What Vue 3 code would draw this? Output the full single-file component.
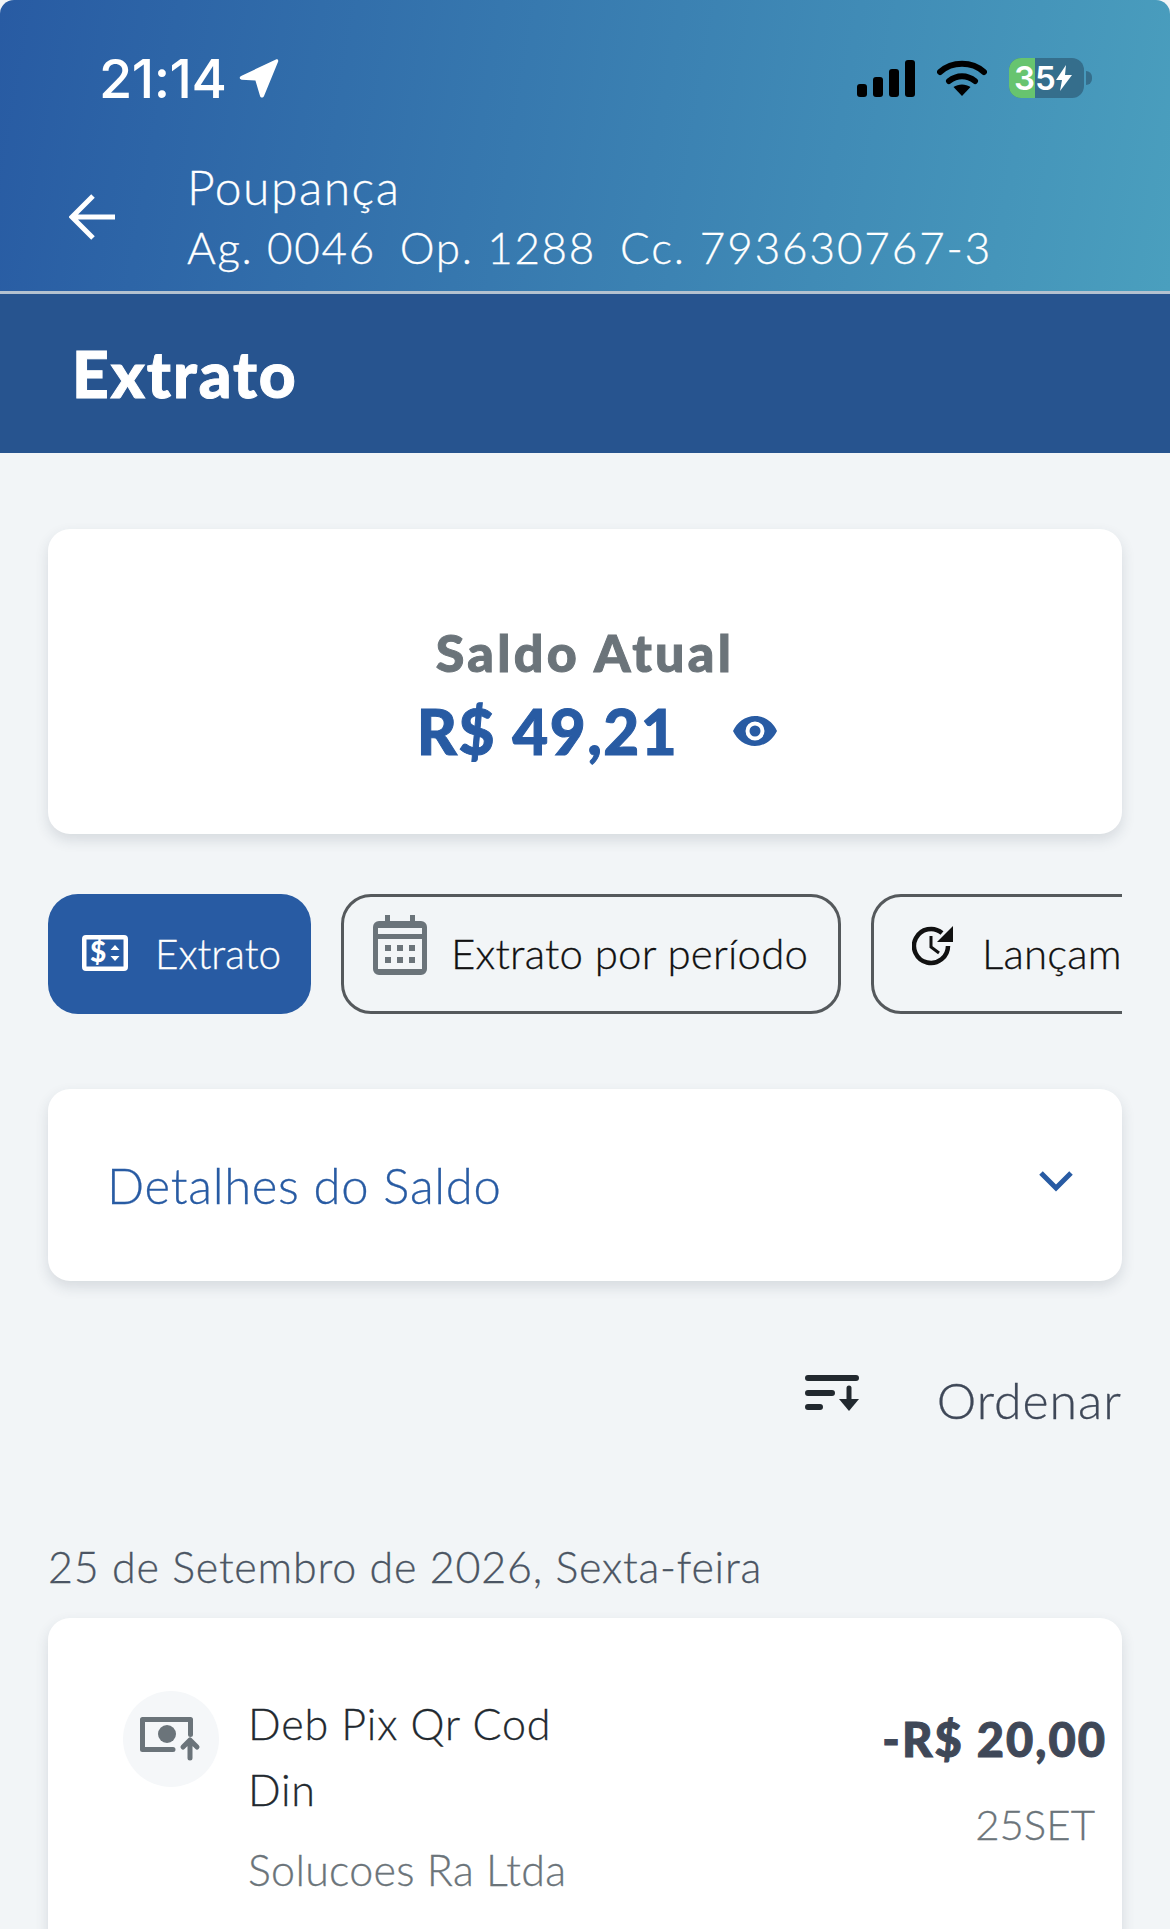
<template>
  <div class="page">
    <header class="top">
      <div class="status">
        <div class="clock">
          <span>21:14</span>
          <svg class="loc" viewBox="0 0 40 40"><path d="M37 1.5 3 17.5c-2 1-1.500 3.500.5 3.600L17 22l4.500 15c.6 2 3 2 3.800.2L39 4c.8-1.800-.3-3.300-2-2.500z" fill="#fff" /></svg>
        </div>
        <div class="indicators">
          <div class="signal">
            <i class="s1"></i><i class="s2"></i><i class="s3"></i><i class="s4"></i>
          </div>
          <svg class="wifi" viewBox="0 0 50 36">
            <path d="M3 12C15 1 35 1 47 12" fill="none" stroke="#000" stroke-width="6" stroke-linecap="round" />
            <path d="M12 21c8-6.500 18-6.500 26 0" fill="none" stroke="#000" stroke-width="6" stroke-linecap="round" />
            <path d="M25 36 16.500 27c5-3.500 12-3.500 17 0z" fill="#000" />
          </svg>
          <div class="battery">
            <span class="fill"></span>
            <span class="pct">35</span>
            <svg class="bolt" viewBox="0 0 16 26"><path d="M10 0 0 15h6l-2 11L16 10H9z" fill="#fff" /></svg>
          </div>
          <span class="nub"></span>
        </div>
      </div>
      <div class="account">
        <svg class="back" viewBox="0 0 48 48">
          <path d="M46 24H4M24 3 3 24l21 21" fill="none" stroke="#fff" stroke-width="5" />
        </svg>
        <div class="account-text">
          <div class="kind">Poupança</div>
          <div class="numbers">
            <span>Ag. 0046</span>
            <span>Op. 1288</span>
            <span class="cc">Cc. 793630767-3</span>
          </div>
        </div>
      </div>
    </header>
    <div class="band">Extrato</div>

    <main class="content">
      <section class="card balance">
        <div class="balance-label">Saldo Atual</div>
        <div class="balance-value">
          <span>R$ 49,21</span>
          <svg class="eye" viewBox="0 0 44 30">
            <path fill-rule="evenodd" d="M22 0c10 0 18 6.500 22 15-4 8.500-12 15-22 15S4 23.500 0 15C4 6.500 12 0 22 0zm0 5.500a9.500 9.500 0 1 0 0 19 9.500 9.500 0 0 0 0-19z" fill="#285ba3" />
            <circle cx="22" cy="15" r="5.500" fill="#285ba3" />
          </svg>
        </div>
      </section>

      <nav class="tabs">
        <div class="tab active">
          <svg class="ic-statement" viewBox="0 0 46 36">
            <path fill-rule="evenodd" d="M4 0h38a4 4 0 0 1 4 4v28a4 4 0 0 1-4 4H4a4 4 0 0 1-4-4V4a4 4 0 0 1 4-4zm.500 4.500v27h37v-27z" fill="#fff" />
            <text x="8" y="27" class="dollar">$</text>
            <path d="M33 10l4.500 5h-9zM33 26l-4.500-5h9z" fill="#fff" />
          </svg>
          <span>Extrato</span>
        </div>
        <div class="tab period">
          <svg class="ic-cal" viewBox="0 0 54 60">
            <path fill-rule="evenodd" d="M12 0h5v6h20V0h5v6h6a6 6 0 0 1 6 6v42a6 6 0 0 1-6 6H6a6 6 0 0 1-6-6V12a6 6 0 0 1 6-6h6zM5 13v6h44v-6zm0 11v30h44V24z" fill="#6b747a" />
            <path d="M12 30h6v6h-6zM24 30h6v6h-6zM36 30h6v6h-6zM12 42h6v6h-6zM24 42h6v6h-6zM36 42h6v6h-6z" fill="#6b747a" />
          </svg>
          <span>Extrato por período</span>
        </div>
        <div class="tab recent">
          <svg class="ic-hist" viewBox="0 0 42 42">
            <path d="M36 21a17 17 0 1 1-6-13" fill="none" stroke="#111" stroke-width="4.500" />
            <path d="M41 1v16H25z" fill="#111" />
            <path d="M19 11v11l8 6" fill="none" stroke="#111" stroke-width="3" />
          </svg>
          <span>Lançamentos</span>
        </div>
      </nav>

      <section class="card details">
        <span>Detalhes do Saldo</span>
        <svg class="chev" viewBox="0 0 36 22"><path d="M3 3l15 15L33 3" fill="none" stroke="#285ba3" stroke-width="5" /></svg>
      </section>

      <div class="sort">
        <svg class="ic-sort" viewBox="0 0 54 36">
          <path d="M3 3h48M3 18h24M3 32h12" fill="none" stroke="#22292f" stroke-width="6" stroke-linecap="round" />
          <path d="M44 13v14" fill="none" stroke="#22292f" stroke-width="5" stroke-linecap="round" />
          <path d="M34 24h20L44 36z" fill="#22292f" />
        </svg>
        <span>Ordenar</span>
      </div>

      <div class="date">25 de Setembro de 2026, Sexta-feira</div>

      <section class="card tx">
        <div class="tx-icon">
          <svg viewBox="0 0 62 44">
            <path d="M33 32.500H2.500v-30h48v15" fill="none" stroke="#6b747a" stroke-width="5" stroke-linecap="round" stroke-linejoin="round" />
            <circle cx="27" cy="17" r="9" fill="#6b747a" />
            <path d="M50 41V24M43 30l7-7 7 7" fill="none" stroke="#6b747a" stroke-width="5" stroke-linecap="round" stroke-linejoin="round" />
          </svg>
        </div>
        <div class="tx-main">
          <div class="tx-title">Deb Pix Qr Cod<br />Din</div>
          <div class="tx-sub">Solucoes Ra Ltda</div>
        </div>
        <div class="tx-side">
          <div class="tx-amount">-R$ 20,00</div>
          <div class="tx-date">25SET</div>
        </div>
      </section>
    </main>
  </div>
</template>

<script setup>
</script>

<style>
html,
body {
  margin: 0;
  background: #fff;
}
</style>

<style scoped>
.page {
  width: 1170px;
  height: 1929px;
  overflow: hidden;
  font-family: Lato, "Noto Sans", sans-serif;
  font-weight: 300;
  -webkit-text-stroke: 0.3px;
  background: #f2f5f7;
}

.top {
  height: 291px;
  box-sizing: border-box;
  border-radius: 14px 14px 0 0;
  background: linear-gradient(100deg, #285ba3 0%, #4a9fbe 100%);
  color: #fff;
}

.status {
  display: flex;
  justify-content: space-between;
  align-items: center;
  height: 64px;
  padding: 46px 78px 0 99px;
}

.clock {
  display: flex;
  align-items: center;
  gap: 12px;
  font-family: Inter, sans-serif;
  font-size: 54px;
  font-weight: 500;
  letter-spacing: -0.500px;
  -webkit-text-stroke: 0;
}

.loc {
  width: 41px;
  height: 41px;
}

.indicators {
  display: flex;
  align-items: center;
}

.signal {
  display: flex;
  align-items: flex-end;
  gap: 6px;
  height: 37px;
  margin-right: 22px;
}

.signal i {
  display: block;
  width: 10px;
  border-radius: 3px;
  background: #000;
}

.s1 { height: 13px; }
.s2 { height: 20px; }
.s3 { height: 28px; }
.s4 { height: 37px; }

.wifi {
  width: 50px;
  height: 36px;
  margin-right: 22px;
}

.battery {
  position: relative;
  display: flex;
  align-items: center;
  width: 75px;
  height: 40px;
  padding-left: 5px;
  box-sizing: border-box;
  overflow: hidden;
  border-radius: 12px;
  background: #356e8c;
}

.fill {
  position: absolute;
  left: 0;
  top: 0;
  bottom: 0;
  width: 26px;
  background: #67c46f;
}

.pct {
  position: relative;
  font-family: Inter, sans-serif;
  font-size: 33px;
  font-weight: 600;
  -webkit-text-stroke: 0;
}

.bolt {
  position: relative;
  width: 16px;
  height: 26px;
}

.nub {
  width: 6px;
  height: 14px;
  margin-left: 2px;
  border-radius: 0 7px 7px 0;
  background: #356e8c;
}

.account {
  display: flex;
  align-items: center;
  margin-top: 47px;
  padding-left: 69px;
}

.back {
  width: 48px;
  height: 48px;
  margin-right: 70px;
}

.kind {
  font-size: 48px;
  line-height: 60px;
  letter-spacing: 1.500px;
}

.numbers {
  display: flex;
  gap: 24px;
  font-size: 44px;
  line-height: 60px;
  letter-spacing: 1.650px;
}

.cc {
  letter-spacing: 1.900px;
}

.band {
  height: 159px;
  border-top: 3px solid #b4c2d0;
  padding-left: 72px;
  line-height: 159px;
  background: #27548f;
  color: #fff;
  font-size: 64px;
  font-weight: 900;
  letter-spacing: 2px;
  -webkit-text-stroke: 1px #fff;
}

.content {
  padding: 76px 48px 0;
}

.card {
  box-sizing: border-box;
  border-radius: 22px;
  background: #fff;
  box-shadow: 0 6px 14px rgba(40, 60, 80, 0.14);
}

.balance {
  height: 305px;
  padding-top: 93px;
  text-align: center;
}

.balance-label {
  font-size: 52px;
  line-height: 60px;
  font-weight: 900;
  letter-spacing: 3.300px;
  color: #6b747a;
  -webkit-text-stroke: 1px #6b747a;
}

.balance-value {
  display: flex;
  justify-content: center;
  align-items: center;
  gap: 55px;
  margin-top: 14px;
  padding-left: 24px;
  font-size: 62px;
  line-height: 70px;
  font-weight: 900;
  letter-spacing: 1.500px;
  color: #285ba3;
  -webkit-text-stroke: 1px #285ba3;
}

.eye {
  width: 44px;
  height: 30px;
}

.tabs {
  display: flex;
  gap: 30px;
  height: 120px;
  margin-top: 60px;
  overflow: hidden;
}

.tab {
  flex: none;
  display: flex;
  align-items: center;
  box-sizing: border-box;
  height: 120px;
  padding-bottom: 2px;
  border: 3px solid #55595c;
  border-radius: 30px;
  font-size: 42px;
  letter-spacing: 0.200px;
  color: #111;
}

.tab.active {
  width: 263px;
  padding-left: 34px;
  gap: 27px;
  border: 0;
  font-size: 40.500px;
  letter-spacing: 0;
  background: #285ba3;
  color: #fff;
}

.period {
  width: 500px;
  padding-left: 29px;
  gap: 24px;
}

.recent {
  width: 400px;
  padding-left: 38px;
  gap: 28px;
}

.ic-statement {
  flex: none;
  width: 46px;
  height: 36px;
}

.dollar {
  font-family: Lato, sans-serif;
  font-size: 28px;
  font-weight: 900;
  fill: #fff;
  -webkit-text-stroke: 0;
}

.ic-cal {
  flex: none;
  width: 54px;
  height: 60px;
  margin-top: -16px;
}

.ic-hist {
  flex: none;
  width: 42px;
  height: 42px;
  margin-top: -14px;
}

.details {
  display: flex;
  justify-content: space-between;
  align-items: center;
  height: 192px;
  margin-top: 75px;
  padding: 0 48px 0 59px;
  font-size: 49px;
  letter-spacing: 0.700px;
  color: #285ba3;
}

.chev {
  width: 36px;
  height: 22px;
  margin-top: -8px;
}

.sort {
  display: flex;
  justify-content: flex-end;
  align-items: center;
  gap: 78px;
  height: 60px;
  margin-top: 89px;
  font-size: 50px;
  letter-spacing: 1px;
  color: #3f4858;
}

.ic-sort {
  width: 54px;
  height: 36px;
  margin-top: -14px;
}

.date {
  margin-top: 107px;
  font-size: 43px;
  line-height: 60px;
  letter-spacing: 0.800px;
  color: #4b5563;
}

.tx {
  display: flex;
  height: 400px;
  margin-top: 21px;
  padding: 73px 15px 0 75px;
}

.tx-icon {
  flex: none;
  display: flex;
  justify-content: center;
  align-items: center;
  width: 96px;
  height: 96px;
  border-radius: 50%;
  background: #f5f7f9;
}

.tx-icon svg {
  width: 62px;
  height: 44px;
}

.tx-main {
  flex: 1;
  margin-left: 29px;
  font-size: 43px;
}

.tx-title {
  line-height: 66px;
  letter-spacing: 0.800px;
  color: #22292f;
}

.tx-sub {
  margin-top: 14px;
  line-height: 66px;
  letter-spacing: 0.300px;
  color: #6b747a;
}

.tx-side {
  margin-top: 13px;
  text-align: right;
}

.tx-amount {
  font-size: 47px;
  line-height: 70px;
  font-weight: 900;
  letter-spacing: 2px;
  color: #3f4858;
  -webkit-text-stroke: 1px #3f4858;
}

.tx-date {
  margin-top: 20px;
  padding-right: 12px;
  font-size: 42px;
  line-height: 60px;
  color: #6b747a;
}
</style>
